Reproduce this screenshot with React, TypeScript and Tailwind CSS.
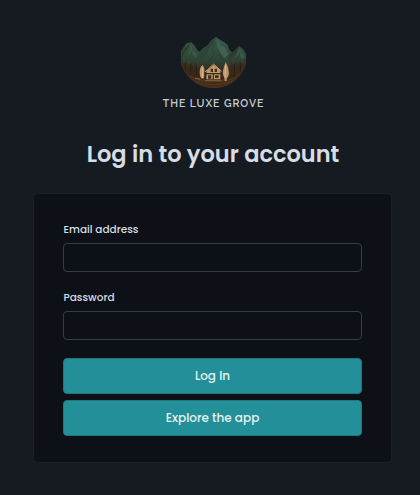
import React from 'react';

function GroveMark() {
  return (
    <svg className="ml-[5px]" width="90" height="65" viewBox="0 0 270 195" aria-hidden="true">
      <defs>
        <linearGradient id="hill" x1="0" y1="28" x2="0" y2="180" gradientUnits="userSpaceOnUse">
          <stop offset="0" stopColor="#3a5a49" />
          <stop offset="0.45" stopColor="#2e4437" />
          <stop offset="0.68" stopColor="#352e1f" />
          <stop offset="1" stopColor="#49301b" />
        </linearGradient>
        <linearGradient id="trees" x1="0" y1="90" x2="0" y2="150" gradientUnits="userSpaceOnUse">
          <stop offset="0" stopColor="#33361f" stopOpacity="0.35" />
          <stop offset="0.5" stopColor="#38291a" />
          <stop offset="1" stopColor="#3b2817" />
        </linearGradient>
        <clipPath id="bowl">
          <path d="M32 0H229V80C229 135 184 179 132 179C78 179 33 136 32 80Z" />
        </clipPath>
      </defs>
      <g clipPath="url(#bowl)">
        <path fill="url(#hill)" d="M28 82L34 69L42 56L50 46L64 43L74 53L82 66L89 72L97 62L113 52L123 38L138 27L151 36L163 43L173 50L178 65L187 74L196 65L207 55L219 63L231 82V182H28Z" />
        <path fill="#2a4639" d="M138 30L129 48L116 62L107 83L91 96L88 77L103 60L114 54L124 38Z" />
        <path fill="#416250" d="M140 35L154 53L163 56L175 79L164 91L154 78L147 70L143 57Z" />
        <path fill="#2c3d30" d="M62 45L55 60L43 76L35 92V72L48 56ZM207 57L199 75L184 91L179 101L175 82L196 66Z" />
        <path fill="#3b5946" d="M64 48L70 65L82 82L77 90L67 78L57 81ZM209 61L218 77L226 86L216 94L207 79L195 90Z" />
        <path fill="none" stroke="#284134" strokeWidth="3" d="M137 43L127 64L132 77L118 101M145 67L153 88L163 98M67 67L58 89L67 105M211 73L199 96L207 107" />
        <path fill="url(#trees)" d="M29 108L37 92L42 108L49 91L56 111L63 98L69 115L77 101L84 121L94 106L101 119L177 119L183 97L190 113L197 97L203 112L211 93L217 109L225 94L233 110V182H29Z" />
        <path fill="#432d1a" d="M45 137Q75 155 106 152H177Q205 150 222 132V182H35Z" />
        <path fill="none" stroke="#593b1e" strokeWidth="2.5" d="M59 142Q81 160 110 159H170Q193 155 210 137M74 161Q133 180 193 159" />
        <path fill="none" stroke="#2a1e14" strokeWidth="3" d="M46 105V130M62 109V140M79 115V145M193 107V145M211 104V131" />
        <path fill="#b8956b" d="M97 111Q105 119 104 137L102 151H94L90 144Q86 120 97 111ZM167 102Q177 119 177 137Q175 147 171 150L169 159H164L163 149Q156 139 160 123Z" />
        <path fill="none" stroke="#d8bb8c" strokeWidth="3" d="M97 118V151M167 109L165 149" />
        <path fill="#3c2819" d="M103 131L131 104L156 129V159H104Z" />
        <path fill="#bd9968" d="M110 128L131 110L151 127V154H109Z" />
        <path fill="none" stroke="#38271b" strokeWidth="3.5" d="M108 137H153M130 138V154" />
        <path fill="none" stroke="#d9b780" strokeWidth="2.5" d="M105 132L131 108L155 130" />
        <path fill="#442e1d" d="M122 122H129V132H122ZM134 122H141V132H134ZM114 142H124V152H114ZM135 142H146V150H135Z" />
        <path stroke="#947045" strokeWidth="2.5" d="M105 158H155M75 150L91 154" />
      </g>
      <path fill="none" stroke="#563a20" strokeWidth="2" d="M33 99C42 144 82 179 132 179C182 179 220 143 228 99" />
    </svg>
  );
}

function Field({ id, label, type }: { id: string; label: string; type: string }) {
  return (
    <div>
      <label htmlFor={id} className="block h-[21px] pt-px pl-[0.5px] text-[10.5px] leading-[14px] font-medium text-[#d8dde5]">
        {label}
      </label>
      <input id={id} type={type} className="block h-[29px] w-full rounded-[4px] border border-[#343c44] bg-[#0d1017] px-2 text-xs outline-none" />
    </div>
  );
}

const buttonClass = 'flex h-9 w-full items-center justify-center rounded-[4px] border border-[#20777e] bg-[#238f98] text-[12px] font-medium text-[#e3f2f2]';

export default function App() {
  return (
    <main className="h-[495px] bg-[#161b22] pr-7 pl-[33px] pt-7 font-['Poppins','Inter',sans-serif]">
      <header className="flex flex-col items-center">
        <GroveMark />
        <div className="mt-[2px] ml-[2px] h-4 font-['Raleway','Lato',sans-serif] text-[10.5px] leading-4 font-semibold tracking-[0.95px] whitespace-nowrap text-[#c8ccd2]">
          THE LUXE GROVE
        </div>
        <h1 className="mt-[25px] ml-px h-9 text-[22.5px] leading-9 font-semibold whitespace-nowrap text-[#d7dde6]">
          Log in to your account
        </h1>
      </header>
      <section className="mt-[21px] h-[270px] rounded-[5px] border border-[#1b2027] bg-[#0d1017] px-[29px] pt-7">
        <form className="flex flex-col" onSubmit={(event) => event.preventDefault()}>
          <Field id="email" label="Email address" type="email" />
          <div className="mt-[18px]">
            <Field id="password" label="Password" type="password" />
          </div>
          <div className="mt-[18px] flex flex-col gap-[6px]">
            <button type="submit" className={buttonClass}>Log In</button>
            <button type="button" className={buttonClass}>Explore the app</button>
          </div>
        </form>
      </section>
    </main>
  );
}
